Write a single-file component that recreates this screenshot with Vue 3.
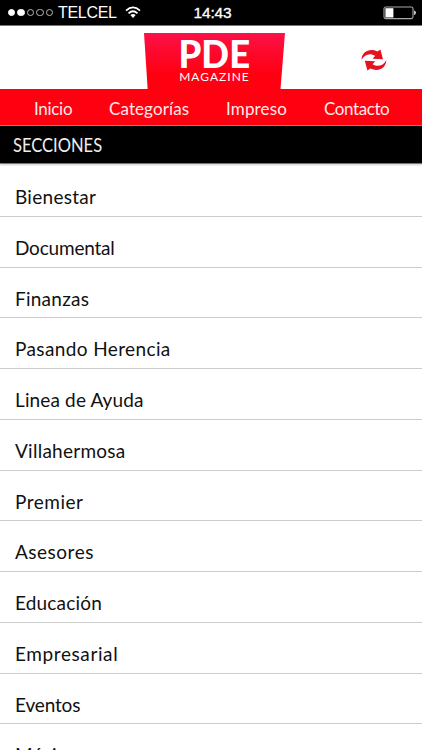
<template>
  <div class="app">
    <div class="status-bar">
      <div class="carrier">
        <span class="signal">
          <i v-for="n in 5" :key="n" :class="{ full: n <= 2 }"></i>
        </span>
        <span class="carrier-name">TELCEL</span>
        <svg class="wifi" width="16" height="13" viewBox="0 0 16 13">
          <g fill="none" stroke="#fff" stroke-width="1.7">
            <path d="M1 4.6 Q8 -1.8 15 4.6" />
            <path d="M3.5 7.3 Q8 3.2 12.5 7.3" />
          </g>
          <path d="M5.4 9 Q8 7 10.6 9 L8 11.9 Z" fill="#fff" />
        </svg>
      </div>
      <span class="time">14:43</span>
      <svg class="battery" width="34" height="14" viewBox="0 0 34 14">
        <rect x="1" y="1" width="29" height="11.6" rx="1.8" fill="none" stroke="#aaa" stroke-width="1.1" />
        <rect x="2.4" y="2.2" width="8" height="9.3" fill="#fff" />
        <path d="M31 4.6 Q33 5 33 6.8 Q33 8.6 31 9 Z" fill="#ccc" />
      </svg>
    </div>

    <header class="header">
      <div class="logo">
        <span class="logo-title">PDE</span>
        <span class="logo-subtitle">MAGAZINE</span>
      </div>
      <button class="refresh" aria-label="Actualizar">
        <svg width="26" height="22" viewBox="0 0 26 22" fill="#e5121f">
          <path d="M0.5 10.8 C0.8 2.6 8.6 -1 16.4 2.4 L19.4 0.4 L22 10.2 L11.6 9.8 L14.2 6.8 C9 3.4 3.6 5.4 0.5 10.8 Z" />
          <path d="M0.5 10.8 C0.8 2.6 8.6 -1 16.4 2.4 L19.4 0.4 L22 10.2 L11.6 9.8 L14.2 6.8 C9 3.4 3.6 5.4 0.5 10.8 Z" transform="rotate(180 12.9 11)" />
        </svg>
      </button>
    </header>

    <nav class="menu">
      <a
        v-for="item in menu"
        :key="item.name"
        :style="{ letterSpacing: item.tracking + 'px' }"
        >{{ item.name }}</a
      >
    </nav>

    <h1 class="title"><span>SECCIONES</span></h1>

    <ul class="sections">
      <li
        v-for="section in sections"
        :key="section.name"
        :style="{ letterSpacing: section.tracking + 'px' }"
      >
        {{ section.name }}
      </li>
    </ul>
  </div>
</template>

<script setup>
import { ref } from "vue";

const menu = ref([
  { name: "Inicio", tracking: -0.3 },
  { name: "Categorías", tracking: 0.1 },
  { name: "Impreso", tracking: 0.15 },
  { name: "Contacto", tracking: -0.4 },
]);

const sections = ref([
  { name: "Bienestar", tracking: 0.28 },
  { name: "Documental", tracking: -0.2 },
  { name: "Finanzas", tracking: 0.25 },
  { name: "Pasando Herencia", tracking: 0.38 },
  { name: "Linea de Ayuda", tracking: 0.14 },
  { name: "Villahermosa", tracking: 0.25 },
  { name: "Premier", tracking: 0.5 },
  { name: "Asesores", tracking: 0.5 },
  { name: "Educación", tracking: 0.18 },
  { name: "Empresarial", tracking: 0.6 },
  { name: "Eventos", tracking: -0.15 },
  { name: "México", tracking: 0.1 },
]);
</script>

<style>
body {
  margin: 0;
  overflow: hidden;
}
</style>

<style scoped>
.app {
  width: 422px;
  height: 750px;
  overflow: hidden;
  background: #fff;
  font-family: Lato, sans-serif;
}

.status-bar {
  box-sizing: border-box;
  height: 26px;
  display: grid;
  grid-template-columns: 1fr auto 1fr;
  align-items: center;
  padding: 0 5px 0 8px;
  background: #000;
  border-bottom: 1px solid #777;
  color: #fff;
  font-family: "Liberation Sans", sans-serif;
  font-size: 16px;
}
.carrier {
  display: flex;
  align-items: center;
}
.signal {
  display: flex;
  gap: 2px;
}
.signal i {
  box-sizing: border-box;
  width: 7.4px;
  height: 7.4px;
  border: 1px solid #bbb;
  border-radius: 50%;
}
.signal i.full {
  background: #fff;
  border-color: #fff;
}
.carrier-name {
  margin: 0 8px 0 5px;
  letter-spacing: -0.3px;
}
.time {
  font-size: 15.5px;
  letter-spacing: -0.2px;
  -webkit-text-stroke: 0.3px #fff;
}
.battery {
  justify-self: end;
}

.header {
  height: 63px;
  display: grid;
  grid-template-columns: 141px 1fr;
  align-items: end;
  padding-left: 144px;
}
.logo {
  height: 56px;
  display: flex;
  flex-direction: column;
  align-items: center;
  background: linear-gradient(#fb1147, #ff0010 75%);
  clip-path: polygon(0 0, 100% 0, 96.8% 100%, 2.6% 100%);
  color: #fff;
}
.logo-title {
  margin-top: 1px;
  font-size: 38px;
  line-height: 38px;
  font-weight: 900;
  transform: scaleX(0.96);
}
.logo-subtitle {
  font-size: 12px;
  line-height: 10px;
  letter-spacing: 1px;
}
.refresh {
  display: flex;
  align-self: start;
  justify-self: start;
  margin: 23px 0 0 76px;
  padding: 0;
  border: 0;
  background: none;
}

.menu {
  box-sizing: border-box;
  height: 37px;
  display: grid;
  grid-template-columns: 75px 117px 98px 1fr;
  align-items: center;
  padding: 2px 0 0 34px;
  background: #ff0010;
  border-bottom: 1px solid #b66;
  color: #ffe9e9;
  font-size: 17px;
}

.title {
  height: 37px;
  margin: 0;
  padding-left: 13px;
  background: #000;
  border-bottom: 1px solid #777;
  box-shadow: 0 1px 2px #ccc;
  color: #eee;
  font-size: 19px;
  font-weight: 400;
  line-height: 38px;
}
.title span {
  display: inline-block;
  transform: scaleX(0.87);
  transform-origin: left;
}

.sections {
  margin: 0;
  padding: 2px 0 0;
  list-style: none;
}
.sections li {
  box-sizing: border-box;
  height: 50.75px;
  padding: 6px 15px 0;
  border-bottom: 1px solid #ccc;
  color: #111;
  font-size: 19px;
  line-height: 50px;
}
</style>
